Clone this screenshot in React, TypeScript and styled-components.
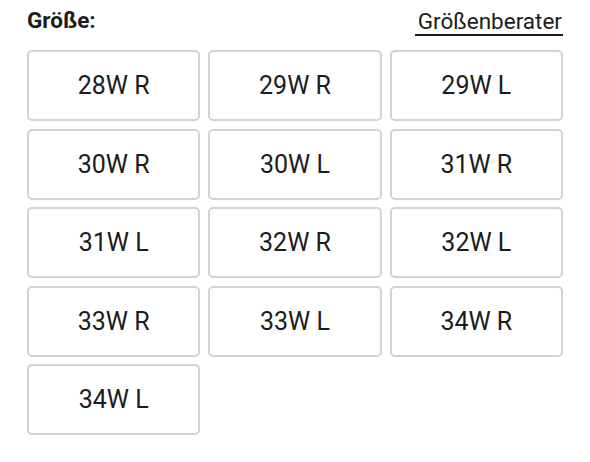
import styled, { createGlobalStyle } from "styled-components";

const GlobalStyle = createGlobalStyle`
  body {
    margin: 0;
    background: #fff;
    font-family: Roboto, "Liberation Sans", sans-serif;
    color: #1c1c1c;
  }
`;

const Wrapper = styled.div`
  width: 536px;
  padding: 0 27px;
`;

const Header = styled.div`
  display: flex;
  justify-content: space-between;
  align-items: flex-start;
  height: 50px;
  padding-top: 7px;
  box-sizing: border-box;
`;

const Label = styled.span`
  font-size: 22.5px;
  font-weight: 700;
  line-height: 26px;
`;

const GuideLink = styled.a`
  margin-top: 0.5px;
  font-size: 22.5px;
  line-height: 26px;
  color: #1c1c1c;
  text-decoration: none;
  border-bottom: 2px solid #1c1c1c;
  padding: 0 1px 0 3px;
  cursor: pointer;
`;

const Grid = styled.div`
  display: grid;
  grid-template-columns: repeat(3, 1fr);
  grid-auto-rows: 71px;
  column-gap: 8px;
  row-gap: 7.5px;
`;

const SizeButton = styled.button`
  border: 2px solid #d2d2d2;
  border-radius: 5px;
  background: #fff;
  font-family: Roboto, "Liberation Sans", sans-serif;
  font-size: 25px;
  color: #1c1c1c;
  cursor: pointer;
  padding: 0;
`;

const sizes = [
  "28W R", "29W R", "29W L",
  "30W R", "30W L", "31W R",
  "31W L", "32W R", "32W L",
  "33W R", "33W L", "34W R",
  "34W L",
];

const App = () => {
  return (
    <>
      <GlobalStyle />
      <Wrapper>
        <Header>
          <Label>Größe:</Label>
          <GuideLink>Größenberater</GuideLink>
        </Header>
        <Grid>
          {sizes.map((s) => (
            <SizeButton key={s}>{s}</SizeButton>
          ))}
        </Grid>
      </Wrapper>
    </>
  );
};

export default App;
